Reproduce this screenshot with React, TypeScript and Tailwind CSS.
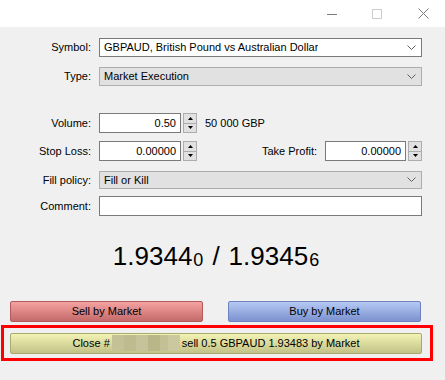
import React from "react";

const FONT = { fontFamily: "Tahoma, 'Liberation Sans', Arial, sans-serif" };

function Chevron() {
  return (
    <svg width="9" height="6" viewBox="0 0 9 6" className="shrink-0">
      <polyline points="0.5,0.5 4.5,4.5 8.5,0.5" fill="none" stroke="#606060" strokeWidth="1" />
    </svg>
  );
}

function Combo({ value, disabled }: { value: string; disabled?: boolean }) {
  return (
    <div
      className={`flex-1 flex items-center justify-between pl-[4px] pr-[5px] border ${
        disabled ? "bg-[#e1e1e1] border-[#adadad] pl-[3px]" : "bg-white border-[#7a7a7a]"
      }`}
    >
      <span className="truncate">{value}</span>
      <Chevron />
    </div>
  );
}

function Spinner() {
  return (
    <div className="w-[14px] h-full ml-[2px] flex flex-col border border-[#adadad] bg-[#e1e1e1]">
      <div className="flex-1 flex items-center justify-center border-b border-[#adadad]">
        <svg width="5" height="3" viewBox="0 0 5 3">
          <polygon points="0,3 5,3 2.5,0" fill="#000" />
        </svg>
      </div>
      <div className="flex-1 flex items-center justify-center">
        <svg width="5" height="3" viewBox="0 0 5 3">
          <polygon points="0,0 5,0 2.5,3" fill="#000" />
        </svg>
      </div>
    </div>
  );
}

function NumInput({ value, width }: { value: string; width: string }) {
  return (
    <div className={`${width} h-full bg-white border border-[#7a7a7a] flex items-center justify-end pr-[4px]`}>
      {value}
    </div>
  );
}

function Label({ children }: { children: React.ReactNode }) {
  return <div className="w-[92px] shrink-0 text-right pr-[1px]">{children}</div>;
}

export default function App() {
  return (
    <div className="w-[445px] h-[380px] overflow-hidden text-[11px] text-black bg-[#f0f0f0]" style={FONT}>
      {/* title bar */}
      <div className="h-[27px] bg-white flex items-center justify-end">
        <div className="w-[10px] h-px bg-[#7a7a7a] mr-[35px] mt-[1px]" />
        <div className="w-[10px] h-[10px] border border-[#cccccc] mr-[36px]" />
        <svg width="11" height="11" viewBox="0 0 11 11" className="mr-[16px]">
          <path d="M0.5 0.5 L10.5 10.5 M10.5 0.5 L0.5 10.5" stroke="#7a7a7a" strokeWidth="1" />
        </svg>
      </div>

      <div className="flex flex-col pr-[23px]">
        <div className="flex items-center h-[21px] mt-[10px] gap-[7px]">
          <Label>Symbol:</Label>
          <Combo value="GBPAUD, British Pound vs Australian Dollar" />
        </div>
        <div className="flex items-center h-[21px] mt-[8px] gap-[7px]">
          <Label>Type:</Label>
          <Combo value="Market Execution" disabled />
        </div>

        <div className="flex items-center h-[20px] mt-[26px] gap-[7px]">
          <Label>Volume:</Label>
          <div className="flex h-full items-center">
            <NumInput value="0.50" width="w-[82px]" />
            <Spinner />
            <span className="ml-[8px]">50 000 GBP</span>
          </div>
        </div>

        <div className="flex items-center h-[20px] mt-[8px] gap-[7px]">
          <Label>Stop Loss:</Label>
          <div className="flex-1 flex h-full items-center">
            <NumInput value="0.00000" width="w-[82px]" />
            <Spinner />
            <div className="flex-1 text-right pr-[8px]">Take Profit:</div>
            <NumInput value="0.00000" width="w-[81px]" />
            <Spinner />
          </div>
        </div>

        <div className="flex items-center h-[22px] mt-[8px] gap-[7px]">
          <Label>Fill policy:</Label>
          <Combo value="Fill or Kill" disabled />
        </div>

        <div className="flex items-center h-[20px] mt-[5px] gap-[7px]">
          <Label>Comment:</Label>
          <div className="flex-1 h-full bg-white border border-[#7a7a7a]" />
        </div>
      </div>

      {/* prices */}
      <div className="w-[412px] ml-[10px] mt-[21px] h-[32px] flex items-end justify-center leading-none">
        <span className="text-[26px]">1.9344</span>
        <span className="text-[18px] ml-[1px]">0</span>
        <span className="text-[26px] mx-[9px]">/</span>
        <span className="text-[26px]">1.9345</span>
        <span className="text-[18px] ml-[1px]">6</span>
      </div>

      {/* buttons */}
      <div className="flex justify-between w-[411px] ml-[10px] mt-[32px]">
        <div className="w-[193px] h-[21px] rounded-[2px] border border-[#b35b5b] bg-gradient-to-b from-[#f5a2a2] to-[#c46a6a] flex items-center justify-center">
          Sell by Market
        </div>
        <div className="w-[193px] h-[21px] rounded-[2px] border border-[#6e82bd] bg-gradient-to-b from-[#b5c9f3] to-[#7d92cf] flex items-center justify-center">
          Buy by Market
        </div>
      </div>

      <div className="w-[432px] h-[36px] ml-[1px] mt-[3px] border-[3px] border-[#ff0000] flex items-center pl-[6px]">
        <div className="w-[412px] h-[21px] rounded-[2px] border border-[#a9a970] bg-gradient-to-b from-[#f3f3b4] to-[#c2c287] flex items-center justify-center">
          <span>Close #</span>
          <span className="flex h-[16px] mx-[2px]">
            <span className="w-[12px] bg-[#c4c196]" />
            <span className="w-[12px] bg-[#bebc8e]" />
            <span className="w-[12px] bg-[#c6c39a]" />
            <span className="w-[12px] bg-[#b9b789]" />
            <span className="w-[8px] bg-[#c2c094]" />
            <span className="w-[12px] bg-[#cbc8a0]" />
          </span>
          <span>sell 0.5 GBPAUD 1.93483 by Market</span>
        </div>
      </div>
    </div>
  );
}
